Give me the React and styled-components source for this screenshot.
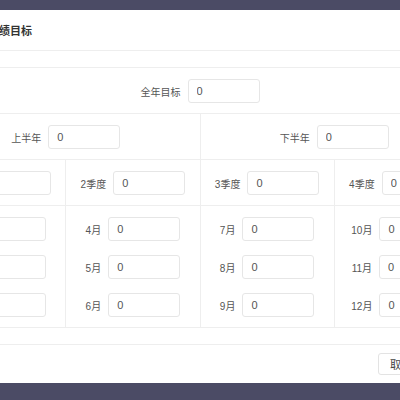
import React from "react";
import styled, { createGlobalStyle } from "styled-components";

const GlobalStyle = createGlobalStyle`
  html, body {
    margin: 0;
    padding: 0;
    background: #4b4b65;
  }
  body {
    font-family: "Liberation Sans", "Noto Sans CJK SC", sans-serif;
  }
`

const Page = styled.div`
  display: flex;
  justify-content: center;
  align-items: flex-start;
  width: 100%;
  height: 100vh;
  padding-top: 10px;
  box-sizing: border-box;
  overflow: hidden;
  background: #4b4b65;
`

const Modal = styled.section`
  flex-shrink: 0;
  width: 600px;
  background: white;
  display: flex;
  flex-direction: column;
`

const Header = styled.div`
  height: 40px;
  display: flex;
  align-items: center;
  padding-left: 88px;
  border-bottom: 1px solid #eeeeee;
`

const Title = styled.h3`
  margin: 0;
  font-size: 11px;
  font-weight: 600;
  color: #333;
`

const Body = styled.div`
  padding: 16px 31px;
`

const Table = styled.div`
  display: grid;
  grid-template-columns: repeat(4, 1fr);
  border-top: 1px solid #eeeeee;
  border-left: 1px solid #eeeeee;
`

const Cell = styled.div`
  grid-column: span ${props => props.span || 1};
  display: flex;
  flex-direction: column;
  align-items: center;
  gap: 14px;
  padding: 11px 0 10px;
  border-right: 1px solid #eeeeee;
  border-bottom: 1px solid #eeeeee;
`

const Field = styled.label`
  display: flex;
  align-items: center;
  gap: 7px;
`

const Label = styled.span`
  font-size: 10px;
  color: #555;
  white-space: nowrap;
`

const InputStyled = styled.input`
  width: 72px;
  height: 24px;
  box-sizing: border-box;
  padding: 0 8px;
  border: 1px solid #e6e6e6;
  border-radius: 3px;
  outline: none;
  font: 11px "Liberation Sans", "Noto Sans CJK SC", sans-serif;
  color: #555;
  background: white;
`

const Footer = styled.div`
  display: flex;
  justify-content: flex-end;
  gap: 8px;
  padding: 8px 22px;
  border-top: 1px solid #eeeeee;
`

const Button = styled.button`
  height: 22px;
  padding: 0 11px;
  font: 11px "Liberation Sans", "Noto Sans CJK SC", sans-serif;
  border-radius: 3px;
  cursor: pointer;
  border: 1px solid ${props => props.primary ? "#4a8af4" : "#e3e3e3"};
  background: ${props => props.primary ? "#4a8af4" : "white"};
  color: ${props => props.primary ? "white" : "#444"};
`

const quarters = ["1季度", "2季度", "3季度", "4季度"];
const months = [
  ["1月", "2月", "3月"],
  ["4月", "5月", "6月"],
  ["7月", "8月", "9月"],
  ["10月", "11月", "12月"],
];

const Target = ({ label }) => (
  <Field>
    <Label>{label}</Label>
    <InputStyled defaultValue="0" />
  </Field>
)

class App extends React.Component {
  render() {
    return (
      <Page>
        <GlobalStyle />
        <Modal>
          <Header>
            <Title>业绩目标</Title>
          </Header>
          <Body>
            <Table>
              <Cell span={4}>
                <Target label="全年目标" />
              </Cell>
              <Cell span={2}>
                <Target label="上半年" />
              </Cell>
              <Cell span={2}>
                <Target label="下半年" />
              </Cell>
              {quarters.map(q => (
                <Cell key={q}>
                  <Target label={q} />
                </Cell>
              ))}
              {months.map((col, i) => (
                <Cell key={i}>
                  {col.map(m => <Target key={m} label={m} />)}
                </Cell>
              ))}
            </Table>
          </Body>
          <Footer>
            <Button type="button">取消</Button>
            <Button type="button" primary>确定</Button>
          </Footer>
        </Modal>
      </Page>
    );
  }
}

export default App;
